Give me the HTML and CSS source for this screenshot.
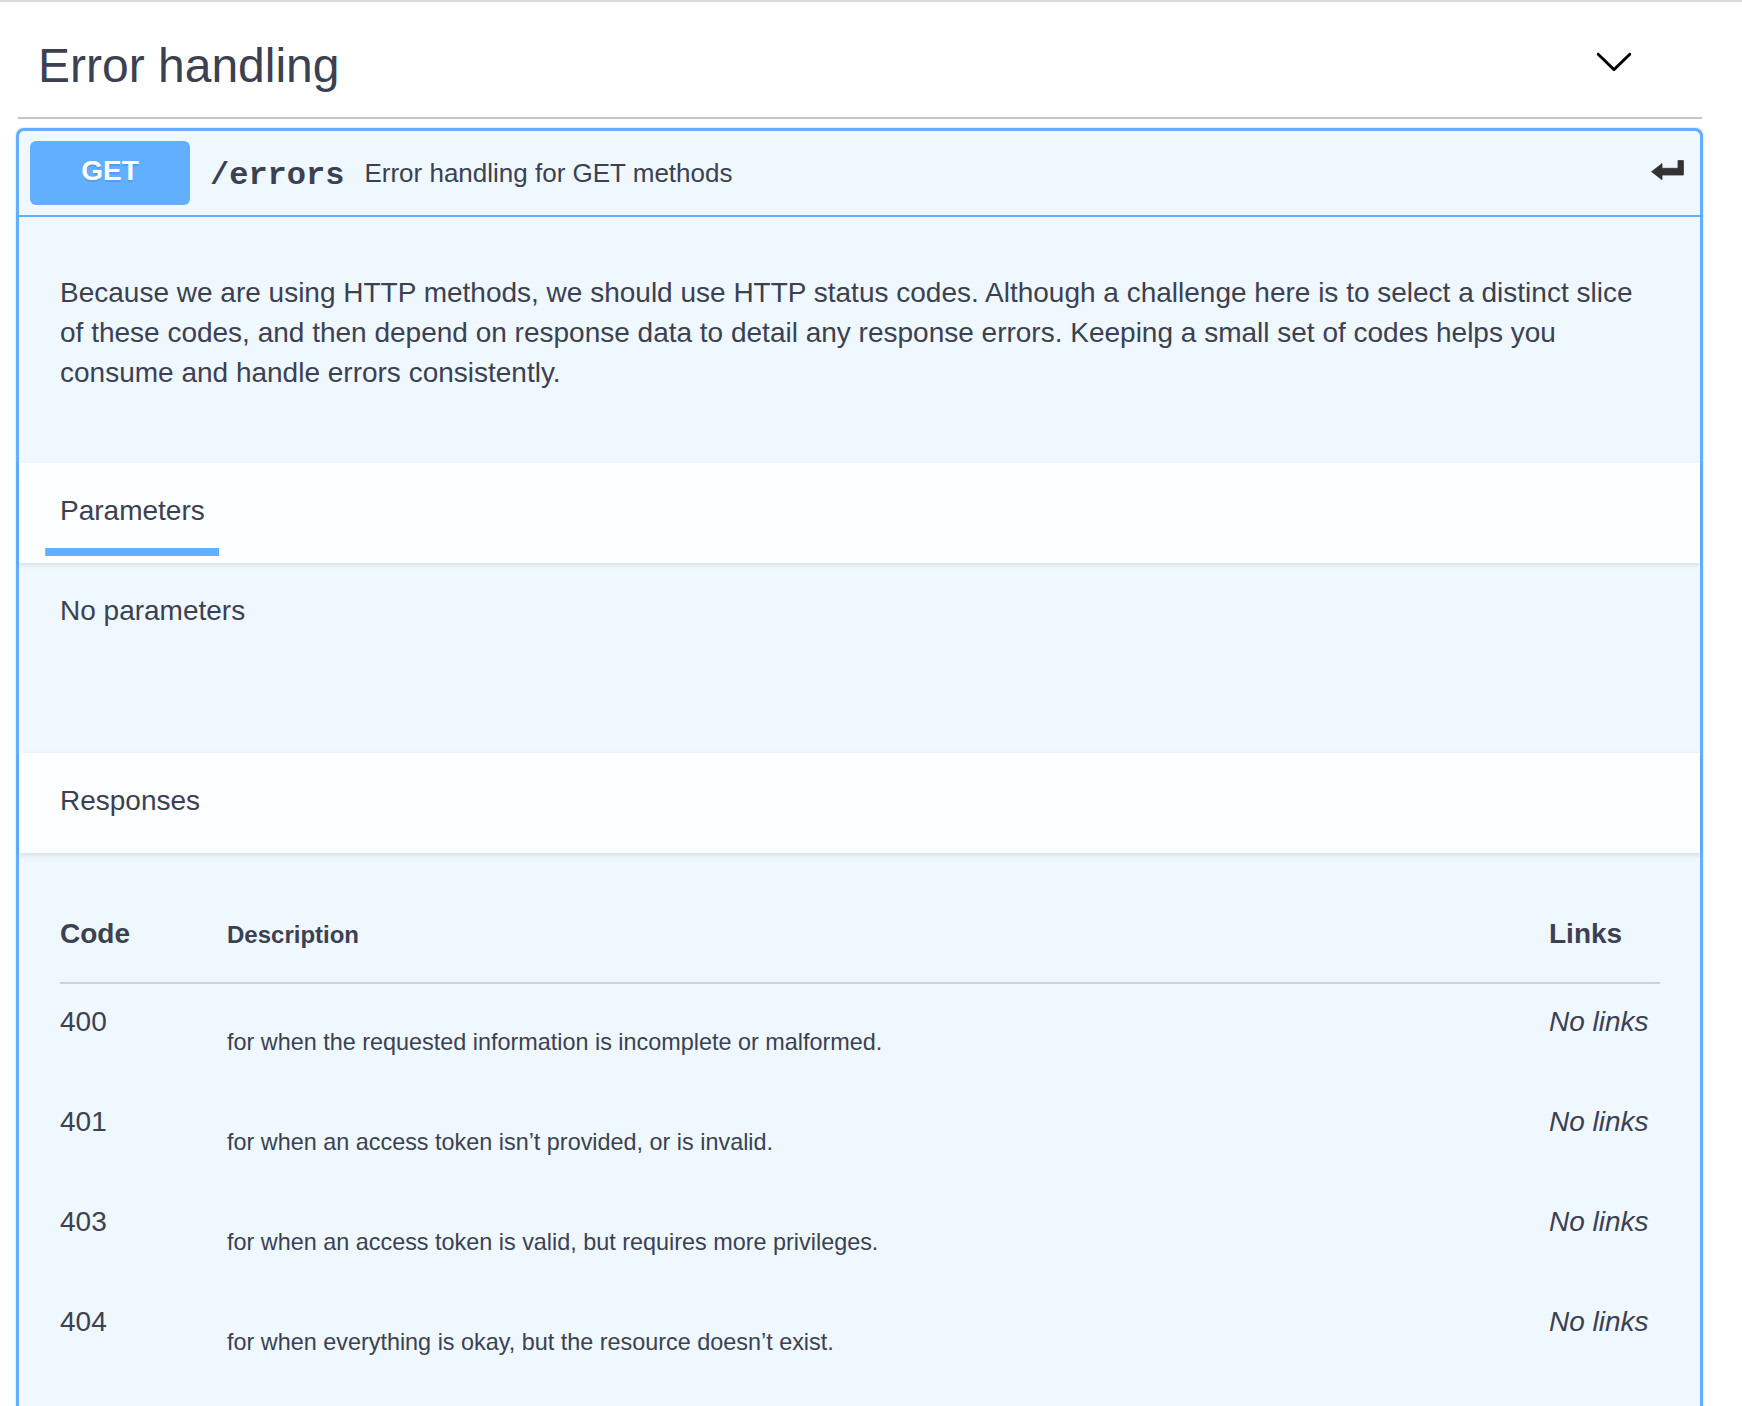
FILE: index.html
```html
<!DOCTYPE html>
<html lang="en">
<head>
<meta charset="utf-8">
<title>Error handling</title>
<link rel="stylesheet" href="styles.css">
</head>
<body>
<div class="page">
  <div class="topline"></div>
  <section class="tag-section">
    <div class="tag-header">
      <h3 class="tag-title">Error handling</h3>
      <button class="expand-btn" aria-label="Collapse operation">
        <svg class="chevron" viewBox="0 0 20 20" width="40" height="40"><path d="M17.418 6.109c.272-.268.709-.268.979 0s.271.701 0 .969l-7.908 7.83c-.27.268-.707.268-.979 0l-7.908-7.83c-.27-.268-.27-.701 0-.969.271-.268.709-.268.979 0L10 13.25l7.418-7.141z"/></svg>
      </button>
    </div>
    <div class="opblock">
      <div class="summary">
        <span class="method">GET</span>
        <span class="path">/errors</span>
        <span class="summary-desc">Error handling for GET methods</span>
        <svg class="link-icon" viewBox="0 0 33 20" width="33" height="20"><path d="M0.6 11.7 L11 3.6 V8.3 H27 V0.6 H32.4 V15 H11 V19.8 Z"/></svg>
      </div>
      <div class="desc-wrapper">
        <p>Because we are using HTTP methods, we should use HTTP status codes. Although a challenge here is to select a distinct slice<br>of these codes, and then depend on response data to detail any response errors. Keeping a small set of codes helps you<br>consume and handle errors consistently.</p>
      </div>
      <div class="section-header">
        <h4 class="section-title"><span class="tab-label">Parameters</span></h4>
      </div>
      <div class="params-body">
        <p>No parameters</p>
      </div>
      <div class="section-header">
        <h4 class="section-title">Responses</h4>
      </div>
      <div class="responses-inner">
        <table class="responses-table">
          <colgroup>
            <col class="col-code">
            <col class="col-desc">
            <col class="col-links">
          </colgroup>
          <thead>
            <tr>
              <th class="th-code">Code</th>
              <th class="th-desc">Description</th>
              <th class="th-links">Links</th>
            </tr>
          </thead>
          <tbody>
            <tr>
              <td class="td-code">400</td>
              <td class="td-desc"><p>for when the requested information is incomplete or malformed.</p></td>
              <td class="td-links">No links</td>
            </tr>
            <tr>
              <td class="td-code">401</td>
              <td class="td-desc"><p>for when an access token isn’t provided, or is invalid.</p></td>
              <td class="td-links">No links</td>
            </tr>
            <tr>
              <td class="td-code">403</td>
              <td class="td-desc"><p>for when an access token is valid, but requires more privileges.</p></td>
              <td class="td-links">No links</td>
            </tr>
            <tr>
              <td class="td-code">404</td>
              <td class="td-desc"><p>for when everything is okay, but the resource doesn’t exist.</p></td>
              <td class="td-links">No links</td>
            </tr>
          </tbody>
        </table>
      </div>
    </div>
  </section>
</div>
</body>
</html>
```
FILE: styles.css
```css
html, body {
  margin: 0;
  padding: 0;
  background: #ffffff;
}

body {
  font-family: "Liberation Sans", Arial, Helvetica, sans-serif;
  color: #3b4151;
}

.page {
  height: 1406px;
  overflow: hidden;
}

.topline {
  height: 2px;
  background: #d9d9d9;
}

.tag-section {
  margin: 0 40px 0 18px;
}

.tag-header {
  display: flex;
  align-items: flex-start;
  height: 115px;
  padding: 0 68px 0 20px;
  border-bottom: 2px solid #c4c6cb;
}

.tag-title {
  flex: 1;
  margin: 36px 0 0;
  font-size: 48px;
  line-height: 56px;
  font-weight: 400;
  color: #3b4151;
}

.expand-btn {
  margin-top: 39px;
  width: 40px;
  height: 40px;
  padding: 0;
  border: 0;
  background: none;
  display: block;
}

.chevron {
  display: block;
  fill: #000;
}

.opblock {
  margin: 9px -1px 0 -2px;
  border: 3px solid #61affe;
  border-bottom: 0;
  border-radius: 8px 8px 0 0;
  background: #eff7ff;
  box-shadow: 0 0 2px rgba(97, 175, 254, 0.6);
}

.summary {
  display: flex;
  align-items: center;
  padding: 10px 10px 10px 11px;
  border-bottom: 2px solid #61affe;
}

.method {
  box-sizing: border-box;
  min-width: 160px;
  height: 64px;
  padding: 16px 0 20px;
  font-size: 28px;
  line-height: 28px;
  font-weight: 700;
  color: #ffffff;
  background: #61affe;
  border-radius: 6px;
  text-align: center;
  text-shadow: 0 2px 0 rgba(0, 0, 0, 0.1);
}

.path {
  padding: 4px 20px 0;
  font-family: "Liberation Mono", "Courier New", monospace;
  font-size: 32px;
  font-weight: 700;
  color: #3b4151;
}

.summary-desc {
  flex: 1;
  font-size: 26px;
  color: #3b4151;
}

.link-icon {
  display: block;
  margin: 0 6px 6px 0;
  fill: #333333;
  stroke: #333333;
  stroke-width: 0.8;
  stroke-linejoin: round;
}

.desc-wrapper {
  padding: 56px 40px 70px 41px;
}

.desc-wrapper p {
  margin: 0;
  font-size: 28px;
  line-height: 40px;
  color: #3b4151;
}

.section-header {
  position: relative;
  box-sizing: border-box;
  min-height: 100px;
  padding: 12px 40px 16px 41px;
  display: flex;
  align-items: center;
  background: rgba(255, 255, 255, 0.8);
  box-shadow: 0 2px 4px rgba(0, 0, 0, 0.1);
}

.section-title {
  margin: 0;
  font-size: 28px;
  line-height: 32px;
  font-weight: 400;
  color: #3b4151;
}

.tab-label {
  position: relative;
}

.tab-label::after {
  content: "";
  position: absolute;
  left: 50%;
  bottom: -30px;
  width: 120%;
  height: 8px;
  transform: translateX(-50%);
  background: #61affe;
}

.params-body {
  padding: 28px 40px 122px 41px;
}

.params-body p {
  margin: 0;
  font-size: 28px;
  line-height: 40px;
}

.responses-inner {
  padding: 41px 40px 40px 41px;
}

.responses-table {
  width: 100%;
  table-layout: fixed;
  border-collapse: separate;
  border-spacing: 0;
}

.col-code {
  width: 167px;
}

.col-links {
  width: 111px;
}

.responses-table th {
  text-align: left;
  padding: 24px 0 31px;
  line-height: 32px;
  font-weight: 700;
  vertical-align: baseline;
  color: #3b4151;
  border-bottom: 2px solid rgba(59, 65, 81, 0.2);
}

.th-code,
.th-links {
  font-size: 28px;
}

.th-desc {
  font-size: 24px;
}

.responses-table td {
  padding: 22px 0 0;
  vertical-align: top;
  color: #3b4151;
}

.td-code {
  font-size: 28px;
  line-height: 32px;
}

.td-desc p {
  margin: 20px 0 26px;
  font-size: 23.4px;
  line-height: 32px;
}

.td-links {
  font-size: 28px;
  line-height: 32px;
  font-style: italic;
}
```
